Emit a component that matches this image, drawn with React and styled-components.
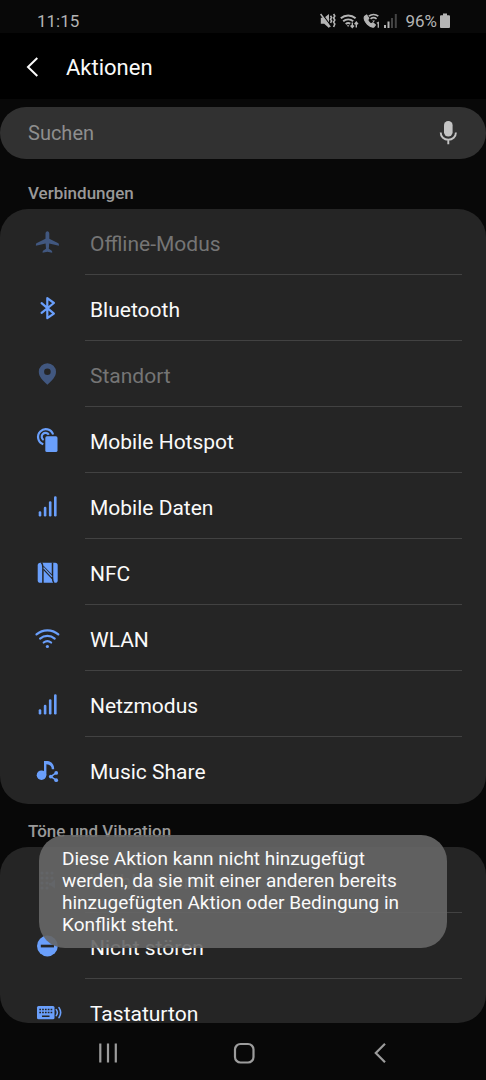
import React from "react";
import styled, { createGlobalStyle } from "styled-components";

const GlobalStyle = createGlobalStyle`
  *, *::before, *::after { box-sizing: border-box; }
  body {
    margin: 0;
    background: #080808;
    color: #fafafa;
    font-family: Roboto, "Noto Sans", sans-serif;
  }
  button, input { font: inherit; color: inherit; }
  button { padding: 0; border: 0; background: none; cursor: pointer; }
  svg { display: block; flex: none; overflow: visible; }
`;

const Screen = styled.div`
  position: relative;
  display: flex;
  flex-direction: column;
  height: 100vh;
  overflow: hidden;
`;

const StatusBar = styled.div`
  flex: none;
  display: flex;
  align-items: center;
  justify-content: space-between;
  height: 33px;
  padding: 8px 36px 0 37px;
  font-size: 17px;
  line-height: 24px;
  color: #b4b4b4;
`;

const StatusIcons = styled.div`
  display: flex;
  align-items: center;
  gap: 4px;
`;

const Battery = styled.span`
  display: flex;
  align-items: center;
  gap: 3px;
  margin-left: 4px;
`;

const Header = styled.header`
  flex: none;
  display: flex;
  align-items: center;
  gap: 24px;
  height: 66px;
  padding: 3px 24px 0;
  background: #000;
`;

const IconButton = styled.button`
  display: grid;
  place-items: center;
`;

const Title = styled.h1`
  margin: 0;
  font-size: 22px;
  line-height: 28px;
  font-weight: 400;
`;

const Search = styled.form`
  flex: none;
  display: flex;
  align-items: center;
  height: 52px;
  margin-top: 8px;
  padding: 0 28px;
  border-radius: 26px;
  background: #313131;
`;

const SearchInput = styled.input`
  flex: 1;
  min-width: 0;
  height: 100%;
  padding: 0;
  border: 0;
  outline: 0;
  background: none;
  font-size: 20px;
  &::placeholder { color: #8e8e8e; opacity: 1; }
`;

const Content = styled.main`
  flex: 1;
  min-height: 0;
  overflow-y: auto;
  scrollbar-width: none;
  border-radius: 0 0 28px 28px;
`;

const SectionTitle = styled.h2`
  margin: 0;
  padding: ${(p) => (p.$first ? "23px" : "16px")} 28px 5px;
  font-size: 17px;
  line-height: 22px;
  font-weight: 500;
  color: #999;
`;

const Card = styled.ul`
  margin: 0;
  padding: 0 0 1px;
  list-style: none;
  border-radius: 28px;
  background: #252525;
`;

const Row = styled.button`
  display: flex;
  align-items: center;
  gap: 23px;
  width: 100%;
  height: 66px;
  padding: 0 24px 0 34px;
  text-align: left;
  color: #fafafa;
  & > svg { color: #6a9ffb; }
  &:disabled { color: #757575; }
  &:disabled > svg { color: #41577f; }
`;

const RowLabel = styled.span`
  flex: 1;
  display: flex;
  align-items: center;
  height: 100%;
  padding: 4px 0 0 5px;
  border-bottom: 1px solid #424242;
  font-size: 21px;
  line-height: 28px;
  li:last-child & { border-bottom-color: transparent; }
`;

const Toast = styled.div`
  position: absolute;
  left: 39px;
  right: 39px;
  bottom: 132px;
  padding: 13px 28px 12px 23px;
  border-radius: 26px;
  background: rgba(102, 102, 102, 0.91);
  font-size: 19px;
  line-height: 22px;
`;

const NavBar = styled.nav`
  flex: none;
  display: grid;
  grid-template-columns: repeat(3, 1fr);
  height: 57px;
  padding: 3px 38px 0 40px;
  color: #9c9c9c;
`;

const Icon = ({ children }) => (
  <svg width="28" height="28" viewBox="0 0 28 28" fill="currentColor" aria-hidden="true">
    {children}
  </svg>
);

const stroke = { fill: "none", stroke: "currentColor", strokeWidth: 2.2, strokeLinecap: "round", strokeLinejoin: "round" };

const PlaneIcon = () => (
  <Icon>
    <path d="M13.4 3.2c-1.100 0-1.900 1.100-1.900 2.500v5l-8.600 4.300c-.6.300-1 .8-1 1.500v1.200l9.700-2.300.4 5.300-2.700 1.700c-.5.400-.7.900-.7 1.400v.9l4.800-.9 4.800.9v-.9c0-.5-.2-1-.7-1.400l-2.700-1.700.4-5.300 9.700 2.300v-1.200c0-.7-.4-1.200-1-1.500l-8.600-4.300V5.700c0-1.400-.8-2.500-1.900-2.500z" />
  </Icon>
);

const BluetoothIcon = () => (
  <Icon>
    <path {...stroke} d="M7.600 9.200L19.900 19.600 13.300 24.200V4.200l6.600 4.800L7.600 18.900" />
  </Icon>
);

const PinIcon = () => (
  <Icon>
    <path fillRule="evenodd" d="M13.400 3.200a8.600 8.600 0 0 0-8.600 8.600c0 5.300 4.300 8.700 8.600 13 4.300-4.300 8.600-7.700 8.600-13a8.600 8.600 0 0 0-8.600-8.600zm0 5.200a3.300 3.300 0 1 1 0 6.600 3.300 3.300 0 0 1 0-6.600z" />
  </Icon>
);

const HotspotIcon = () => (
  <Icon>
    <rect x="11.300" y="10.300" width="12.200" height="15.800" rx="1.600" />
    <path {...stroke} strokeLinecap="butt" d="M9.300 18.200a7.700 7.700 0 1 1 9.800-9.700M9.600 14a3.800 3.800 0 1 1 5.200-5.200" />
  </Icon>
);

const SignalIcon = () => (
  <Icon>
    <rect x="4.700" y="19.300" width="2.600" height="5.200" rx="1.200" />
    <rect x="9.800" y="14.700" width="2.600" height="9.800" rx="1.200" />
    <rect x="14.900" y="9.300" width="2.600" height="15.200" rx="1.200" />
    <rect x="20" y="4.200" width="2.600" height="20.300" rx="1.200" />
  </Icon>
);

const NfcIcon = () => (
  <Icon>
    <rect x="3.700" y="4.800" width="20" height="20" rx="2.600" />
    <path d="M8.900 25V9.500c0-2.200-.5-3.800-1.500-4.900M18.500 4.600v15.500c0 2.200.5 3.800 1.500 4.900" fill="none" stroke="#252525" strokeWidth="1.500" />
    <path d="M9.300 7.500L18.500 17v4.800L9.300 12z" fill="#252525" />
    <path d="M9.600 9.600L18 18.700" stroke="currentColor" strokeWidth="1.300" />
  </Icon>
);

const WifiIcon = () => (
  <Icon>
    <path {...stroke} d="M2.500 10.400a16.500 16.500 0 0 1 21.800 0M6.100 14.600a11.300 11.300 0 0 1 14.600 0M9.700 18.500a6 6 0 0 1 7.400 0" />
    <circle cx="13.400" cy="22.500" r="1.600" />
  </Icon>
);

const MusicShareIcon = () => (
  <Icon>
    <circle cx="7.500" cy="19.200" r="4.800" />
    <path d="M10 19V5h3.400c4 .5 6.800 3.200 6.800 8.200h-2.400c0-3-1.700-4.600-5.400-5V19z" />
    <circle cx="22.200" cy="16.900" r="1.900" />
    <circle cx="16.800" cy="20.600" r="1.900" />
    <circle cx="22.200" cy="24.200" r="1.900" />
    <path d="M22.200 16.900l-5.400 3.700 5.400 3.600" fill="none" stroke="currentColor" strokeWidth="1.500" />
  </Icon>
);

const DialpadIcon = () => (
  <Icon>
    {[7, 12, 17, 22].map((y) => [8, 13, 18].map((x) => (
      x === 18 && y > 12 ? null : <circle key={`${x}-${y}`} cx={x} cy={y} r="1.500" />
    )))}
    <path d="M15 17h2l4-3.500v9L17 19.500h-2z" />
  </Icon>
);

const DoNotDisturbIcon = () => (
  <Icon>
    <circle cx="13.400" cy="14" r="10.400" />
    <rect x="6.800" y="12.700" width="13.200" height="2.700" fill="#252525" />
  </Icon>
);

const KeyboardIcon = () => (
  <Icon>
    <rect x="3" y="8" width="17.500" height="13.200" rx="1.500" />
    <path d="M5.300 11.500h13M5.300 14.500h13" stroke="#252525" strokeWidth="1.600" strokeDasharray="1.700 1.120" />
    <path d="M8 18.200h7.500" stroke="#252525" strokeWidth="1.400" />
    <path d="M22.300 11.600a5.200 5.200 0 0 1 0 6M25 9.600a9 9 0 0 1 0 10" fill="none" stroke="currentColor" strokeWidth="1.600" strokeLinecap="round" />
  </Icon>
);

const MuteVibrateIcon = () => (
  <svg width="16" height="16" viewBox="0 0 16 16" fill="currentColor" aria-hidden="true">
    <path d="M.8 4.800h3.400L9 1v14l-4.800-4.200H.8z" />
    <path d="M2 1l8.500 11.400" stroke="#080808" strokeWidth="1.300" />
    <path d="M.6 1l9.600 13" fill="none" stroke="currentColor" strokeWidth="1.500" />
    <path d="M10.500 2.800l1.100 1.700-1.100 1.700 1.100 1.700-1.100 1.900M13.600 1l1.200 2-1.200 2 1.200 2-1.200 2 1.200 2-1.200 3" fill="none" stroke="currentColor" strokeWidth="1.600" />
  </svg>
);

const WifiStatusIcon = () => (
  <svg width="19" height="16" viewBox="0 0 19 16" fill="none" stroke="currentColor" strokeWidth="1.900" aria-hidden="true">
    <path d="M.8 5.300a11 11 0 0 1 14.800 0M3.200 8.300a7.500 7.500 0 0 1 10-.1M5.700 11a4 4 0 0 1 4.600-.4" />
    <path d="M6.800 12.200h2.600L8.100 14z" fill="currentColor" stroke="none" />
    <path d="M12.300 9.500v5M10.600 12.500l1.700 2 1.700-2M16.300 14.500v-5M14.600 11.200l1.700-2 1.700 2" strokeWidth="1.400" />
  </svg>
);

const WifiCallIcon = () => (
  <svg width="17" height="16" viewBox="0 0 17 16" fill="none" stroke="currentColor" aria-hidden="true">
    <path d="M3.700 2L1.500 3.500C.6 5 1.500 8.500 4.500 11.300c2.500 2.300 5 3.300 6.400 2.700l1.500-2-2.600-2.200-1.700 1.100C6.500 10 5.300 8.500 4.600 7l1.200-1.600z" fill="currentColor" strokeWidth="1.200" strokeLinejoin="round" />
    <path d="M5.800 3.200a7.500 7.500 0 0 1 9.500 0M7.500 5.800a4.800 4.800 0 0 1 6.100 0" strokeWidth="1.700" />
    <path d="M9.200 7.500h2.800L10.600 9.300z" fill="currentColor" stroke="none" />
    <path d="M13.800 10.300l1.500-.8v5.200" strokeWidth="1.300" />
  </svg>
);

const SignalStatusIcon = () => (
  <svg width="13" height="16" viewBox="0 0 13 16" fill="currentColor" aria-hidden="true">
    <rect x="0" y="12" width="2" height="3" />
    <rect x="3.500" y="8.500" width="2" height="6.500" />
    <rect x="7" y="5" width="2" height="10" opacity=".35" />
    <rect x="10.800" y="1" width="2" height="14" opacity=".35" />
  </svg>
);

const BatteryIcon = () => (
  <svg width="10" height="16" viewBox="0 0 10 16" fill="currentColor" aria-hidden="true">
    <path d="M3 .5h4v1.700h2a1 1 0 0 1 1 1V14a1 1 0 0 1-1 1H1a1 1 0 0 1-1-1V3.200a1 1 0 0 1 1-1h2z" />
  </svg>
);

const sections = [
  {
    title: "Verbindungen",
    rows: [
      { label: "Offline-Modus", icon: PlaneIcon, disabled: true },
      { label: "Bluetooth", icon: BluetoothIcon },
      { label: "Standort", icon: PinIcon, disabled: true },
      { label: "Mobile Hotspot", icon: HotspotIcon },
      { label: "Mobile Daten", icon: SignalIcon },
      { label: "NFC", icon: NfcIcon },
      { label: "WLAN", icon: WifiIcon },
      { label: "Netzmodus", icon: SignalIcon },
      { label: "Music Share", icon: MusicShareIcon },
    ],
  },
  {
    title: "Töne und Vibration",
    rows: [
      { label: "Wähltastenton", icon: DialpadIcon, disabled: true },
      { label: "Nicht stören", icon: DoNotDisturbIcon },
      { label: "Tastaturton", icon: KeyboardIcon },
    ],
  },
];

export default function App() {
  return (
    <>
      <GlobalStyle />
      <Screen>
        <StatusBar>
          <time>11:15</time>
          <StatusIcons>
            <MuteVibrateIcon />
            <WifiStatusIcon />
            <WifiCallIcon />
            <SignalStatusIcon />
            <Battery>96%<BatteryIcon /></Battery>
          </StatusIcons>
        </StatusBar>
        <Header>
          <IconButton type="button" aria-label="Zurück">
            <svg width="18" height="24" viewBox="0 0 18 24" fill="none" stroke="#fafafa" strokeWidth="2" aria-hidden="true">
              <path d="M13.300 2L4 11l9.300 9" />
            </svg>
          </IconButton>
          <Title>Aktionen</Title>
        </Header>
        <Search role="search" onSubmit={(e) => e.preventDefault()}>
          <SearchInput type="text" aria-label="Suchen" placeholder="Suchen" />
          <IconButton type="button" aria-label="Spracheingabe">
            <svg width="20" height="26" viewBox="0 0 20 26" fill="#c4c4c4" aria-hidden="true">
              <rect x="6" y="1" width="8.600" height="15.500" rx="4.200" />
              <path d="M2.700 12.500c0 4.300 3.400 7.300 7.600 7.300s7.600-3 7.600-7.300M10.300 19.500V24.300" fill="none" stroke="#c4c4c4" strokeWidth="1.900" />
            </svg>
          </IconButton>
        </Search>
        <Content>
          {sections.map((section, i) => (
            <section key={section.title}>
              <SectionTitle $first={i === 0}>{section.title}</SectionTitle>
              <Card>
                {section.rows.map(({ label, icon: RowIcon, disabled }) => (
                  <li key={label}>
                    <Row type="button" disabled={disabled}>
                      <RowIcon />
                      <RowLabel>{label}</RowLabel>
                    </Row>
                  </li>
                ))}
              </Card>
            </section>
          ))}
        </Content>
        <NavBar>
          <IconButton type="button" aria-label="Letzte Apps">
            <svg width="20" height="20" viewBox="0 0 20 20" fill="none" stroke="currentColor" strokeWidth="2.200" aria-hidden="true">
              <path d="M2.300.5v19M10 .5v19M17.800.5v19" />
            </svg>
          </IconButton>
          <IconButton type="button" aria-label="Startbildschirm">
            <svg width="22" height="22" viewBox="0 0 22 22" fill="none" stroke="currentColor" strokeWidth="2.200" aria-hidden="true">
              <rect x="2" y="2" width="18.500" height="18.500" rx="5.500" />
            </svg>
          </IconButton>
          <IconButton type="button" aria-label="Zurück">
            <svg width="20" height="20" viewBox="0 0 20 20" fill="none" stroke="currentColor" strokeWidth="2.200" aria-hidden="true">
              <path d="M15 .8L5.800 10l9.200 9.200" />
            </svg>
          </IconButton>
        </NavBar>
        <Toast role="status">
          Diese Aktion kann nicht hinzugefügt werden, da sie mit einer anderen bereits hinzugefügten Aktion oder Bedingung in Konflikt steht.
        </Toast>
      </Screen>
    </>
  );
}
